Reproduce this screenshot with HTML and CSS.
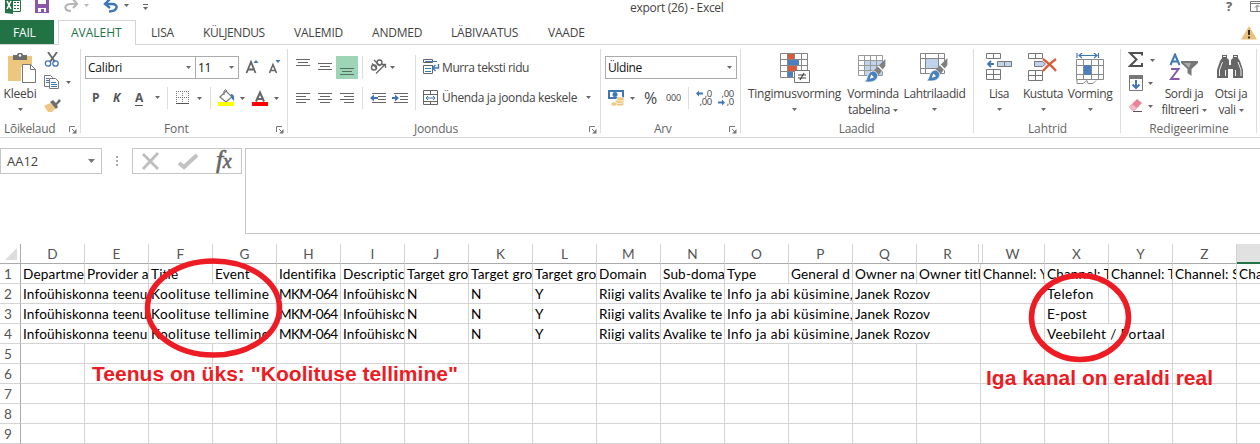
FILE: index.html
```html
<!DOCTYPE html>
<html lang="et">
<head>
<meta charset="utf-8">
<title>export (26) - Excel</title>
<link rel="stylesheet" href="styles.css">
</head>
<body>
<svg class="defs" aria-hidden="true">
  <symbol id="caret" viewBox="0 0 5 3"><path d="M0 0h5L2.5 3z" fill="#6a6a6a"/></symbol>
  <symbol id="launch" viewBox="0 0 8 8"><path d="M.5 6V.5H6M3 3l3 3" stroke="#777" fill="none"/><path d="M7.500 3v4.500H3z" fill="#777"/></symbol>
  <symbol id="brush" viewBox="0 0 16 17"><path d="M15 0v5L9 13 5 10z" fill="#808080"/><path d="M10 5l4 4" stroke="#fff"/><path d="M6 8.500c2 0 4 2 3.500 4C9 16 4 17 0 16c3-1 1-6 6-7.500z" fill="#4a80bd" stroke="#fff" stroke-width=".6"/><path d="M5 11l2 2-3 1z" fill="#fff"/></symbol>
</svg>
<div class="app">
  <header class="titlebar">
    <svg class="quick" width="160" height="20">
      <path d="M5 0h8v14l-8-1z" fill="#217346"/><path d="M13 .5h7.500v11H13" fill="#fff" stroke="#217346"/><path d="M14 2.500h5M14 5.500h5M14 8.500h5" stroke="#217346" stroke-dasharray="2 1"/><path d="M7 1l4 8M11 1L7 9" stroke="#fff" stroke-width="1.600"/>
      <path d="M35 0h14v13H35z" fill="#8857ab"/><path d="M38 0h8v4h-8z" fill="#fff"/><path d="M38 8h8v4h-2V9h-3v3h-3z" fill="#fff"/>
      <path d="M77 4H71c-8 0-7 7 0 7M73-1l4 5-4 4" stroke="#b5b5b5" stroke-width="2.200" fill="none"/><path d="M84 4h5l-2.500 3z" fill="#b9b9b9"/>
      <path d="M105 4h7c7 0 6 7-3 7.500M110-1l-5 5 5 4" stroke="#3f76b8" stroke-width="2.400" fill="none"/><path d="M124 4h5l-2.500 3z" fill="#666"/>
      <path d="M143 4.500h5" stroke="#666"/><path d="M143 7h5l-2.500 3z" fill="#666"/>
    </svg>
    <h1 class="doc-title">export (26) - Excel</h1>
    <span class="help">?</span>
    <svg class="win" width="10" height="13"><path d="M.5 1.500H14v10H.5zM0 3.500h10" stroke="#777" fill="none"/><path d="M7 11V6M5 7.500L7.500 5l2 2" stroke="#777" fill="none"/></svg>
  </header>
  <nav class="tabs">
    <a class="tab file">FAIL</a><a class="tab active">AVALEHT</a><a class="tab t-lisa">LISA</a><a class="tab t-kul">KÜLJENDUS</a><a class="tab t-val">VALEMID</a><a class="tab t-and">ANDMED</a><a class="tab t-lab">LÄBIVAATUS</a><a class="tab t-vaa">VAADE</a>
    <svg class="warn" width="16" height="14"><path d="M8 0l8 13.500H0z" fill="#ecc07b"/><path d="M8 4v5M8 10.500v2" stroke="#333" stroke-width="2"/></svg>
  </nav>
  <section class="ribbon">
    <div class="group g-clip">
      <div class="body bigs">
        <div class="big b-paste"><svg width="30" height="31"><path d="M0 3h24v11H13v14H0z" fill="#edc67f"/><path d="M5 7V2h4c0-3 6-3 6 0h4v5z" fill="#6d6d6d"/><circle cx="12" cy="2.500" r="1.200" fill="#fff"/><path d="M14.500 11.500h8l5 5v13h-13z" fill="#fff" stroke="#777"/><path d="M22.500 11.500v5h5" fill="none" stroke="#777"/></svg><span>Kleebi</span><svg class="caret"><use href="#caret"/></svg></div>
        <div class="smalls">
          <svg width="30" height="18"><path d="M4 0l7 10M13 0L6 10" stroke="#666" stroke-width="1.800"/><circle cx="4" cy="11.500" r="2.700" fill="none" stroke="#3f76b8" stroke-width="1.300"/><circle cx="11.500" cy="11.500" r="2.700" fill="none" stroke="#3f76b8" stroke-width="1.300"/></svg>
          <svg width="30" height="18"><path d="M.5.5h6l2 2v9h-8z" fill="#fff" stroke="#777"/><path d="M2 3.500h3M2 5.500h3M2 7.500h3" stroke="#3f76b8"/><path d="M5.500 3.500h6l3 3v7h-9z" fill="#fff" stroke="#777"/><path d="M7 7.500h5M7 9.500h6M7 11.500h6" stroke="#3f76b8"/><path d="M22 6h5l-2.500 3z" fill="#666"/></svg>
          <svg width="30" height="18"><path d="M0 8l6-3 6 5-4 4H4z" fill="#efc684"/><path d="M6 4l3-2 3 3 3-4 2 2-4 4 1 2-2 2z" fill="#6d6d6d"/></svg>
        </div>
      </div>
      <footer><span>Lõikelaud</span><svg class="launch"><use href="#launch"/></svg></footer>
    </div>
    <div class="group g-font">
      <div class="body rows">
        <div class="row font1">
          <div class="combo">Calibri<svg class="caret"><use href="#caret"/></svg></div><div class="combo">11<svg class="caret"><use href="#caret"/></svg></div>
          <svg width="46" height="23"><path d="M7.500 17L12 6l4.500 11M9 13.500h6" stroke="#666" stroke-width="1.800" fill="none"/><path d="M14.500 7h5L17 4z" fill="#3f76b8"/><path d="M30.500 17L34 8.500l3.500 8.500M31.500 14.500h5" stroke="#666" stroke-width="1.600" fill="none"/><path d="M36.500 4h5L39 7z" fill="#3f76b8"/></svg>
        </div>
        <div class="row font2">
          <b>P</b><b><i>K</i></b><b class="ul">A</b><svg class="caret"><use href="#caret"/></svg><i class="sep"></i>
          <svg width="36" height="24"><path d="M8.500 5v12M14.500 5v12M20.500 5v12M8 5.500h13M8 11.500h13" stroke="#777" stroke-dasharray="1 1"/><path d="M8 17.500h13" stroke="#555"/><path d="M29 11h5l-2.500 3z" fill="#666"/></svg><i class="sep s2"></i>
          <svg width="72" height="24"><path d="M9 11l6-6 6 6-6 5z" fill="#fff" stroke="#777" stroke-width="1.200"/><path d="M13 9V5q1.500-3 3 0" fill="none" stroke="#777"/><path d="M20 8q4 0 3 7-2-1-3-5z" fill="#3f76b8"/><path d="M7 16h16v4H7z" fill="#ff0"/><path d="M29 11h5l-2.500 3zM63 11h5l-2.500 3z" fill="#666"/><path d="M45 15.500L49 6.500l4 9M46.500 13h5" stroke="#666" stroke-width="2" fill="none"/><path d="M41 16h16v4H41z" fill="red"/></svg>
        </div>
      </div>
      <footer><span>Font</span><svg class="launch"><use href="#launch"/></svg></footer>
    </div>
    <div class="group g-align">
      <div class="body cols">
        <div class="rows">
          <svg class="row" width="127" height="23"><path d="M8 3.500h14M10 6.500h10M8 9.500h14M30 7.500h14M32 10.500h10M30 13.500h14" stroke="#666"/><path d="M48 0h22v23H48z" fill="#9fd5b7"/><path d="M52 12.500h14M54 15.500h10M52 18.500h14" stroke="#52705f"/><path d="M74.500 0v23" stroke="#ddd"/><g fill="none" stroke="#666" stroke-width="1.400"><circle cx="86" cy="11.500" r="2.500"/><path d="M84 7.500l5 5M86 4l6 6"/><circle cx="91.500" cy="6.500" r="2.500"/><path d="M88 17.500l9-9M93.500 8.500h4V12" stroke-width="1.300"/></g><path d="M102 10h5l-2.500 3z" fill="#666"/></svg>
          <svg class="row r2" width="127" height="24"><path d="M8 7.500h14M8 10.500h10M8 13.500h14M8 16.500h10M30 7.500h14M32 10.500h10M30 13.500h14M32 16.500h10M52 7.500h14M56 10.500h10M52 13.500h14M56 16.500h10M84 7.500h14M90 10.500h8M90 13.500h8M84 16.500h14M106 7.500h14M112 10.500h8M112 13.500h8M106 16.500h14" stroke="#666"/><path d="M74.500 1v22" stroke="#ddd"/><path d="M82 12l4-3.500v2.500h4v2h-4v2.500zM111 12l-4-3.500v2.500h-3v2h3v2.500z" fill="#3f76b8"/></svg>
        </div>
        <i class="sep tall"></i>
        <div class="rows wraps">
          <div class="row"><svg width="19" height="23"><path d="M.5 3.500h9v3h-9zM9.500 9v8.500h-9v-8h9" fill="none" stroke="#666"/><path d="M2 5.500h12M2 12.500h6M2 15.500h6" stroke="#3f76b8"/><path d="M15.500 8v4H10M12.500 9l-3 3 3 3" stroke="#3f76b8" stroke-width="1.400" fill="none"/></svg><span class="murra">Murra teksti ridu</span></div>
          <div class="row r2"><svg width="19" height="24"><path d="M.5 4.500h14v14H.5zM.5 8.500h14M.5 15.500h14M7.500 4v4M7.500 15.500v3" fill="none" stroke="#666"/><path d="M3 12h9M5 10l-2 2 2 2M10 10l2 2-2 2" stroke="#3f76b8" fill="none"/></svg><span class="yhenda">Ühenda ja joonda keskele</span><svg class="caret"><use href="#caret"/></svg></div>
        </div>
      </div>
      <footer><span>Joondus</span><svg class="launch"><use href="#launch"/></svg></footer>
    </div>
    <div class="group g-num">
      <div class="body rows">
        <div class="row"><div class="combo">Üldine<svg class="caret"><use href="#caret"/></svg></div></div>
        <div class="row num2"><svg width="29" height="24"><path d="M1 4h16v9H1z" fill="#3f76b8"/><path d="M3 6h12v5H3z" fill="#fff"/><circle cx="8" cy="8.500" r="2.500" fill="#3f76b8"/><g fill="#edc67f" stroke="#fff" stroke-width=".7"><ellipse cx="12.500" cy="18" rx="4.500" ry="2"/><ellipse cx="12.500" cy="15.500" rx="4.500" ry="2"/><ellipse cx="13.500" cy="13" rx="4" ry="2"/><ellipse cx="7" cy="18" rx="3" ry="2"/></g><path d="M23 11h5l-2.500 3z" fill="#666"/></svg><span class="pct">%</span><span class="tho">000</span><i class="sep"></i>
          <span class="dec"><span class="l1">,0</span><span>,00</span><svg width="8" height="7"><path d="M0 3.500l3-3v2h4v2H3v2z" fill="#3f76b8"/></svg></span>
          <span class="dec inc"><span>,00</span><span class="l1">,0</span><svg width="8" height="7"><path d="M7 3.500l-3-3v2H0v2h4v2z" fill="#3f76b8"/></svg></span></div>
      </div>
      <footer><span>Arv</span><svg class="launch"><use href="#launch"/></svg></footer>
    </div>
    <div class="group g-style">
      <div class="body bigs">
        <div class="big b-cond"><svg width="30" height="31"><path d="M.5.5h27v24H.5zM.5 6.500h27M.5 12.500h27M.5 18.500h27M7.500 0v24M14.500 0v24M21.500 0v24" fill="#fff" stroke="#858585"/><path d="M8 1h6v5H8zM8 13h9v5H8z" fill="#d95b3b"/><path d="M8 7h11v5H8zM8 19h5v5H8z" fill="#4a80bd"/><path d="M14.500 17.500h15v12h-15z" fill="#fff" stroke="#777"/><path d="M18 22h8M18 25h8M24 20l-4 7" stroke="#444" stroke-width="1.200"/></svg><span>Tingimusvorming</span><svg class="caret"><use href="#caret"/></svg></div>
        <div class="big b-tab"><svg width="30" height="31"><path d="M0 2.500h24.500v20H.5v-20" fill="#fff"/><path d="M6 7h18v15H6z" fill="#bfd3ea"/><path d="M.5 2.500h24v20H.5zM.5 7.500h24M.5 12.500h24M.5 17.500h24M6.500 2v20M12.500 2v20M18.500 2v20" fill="none" stroke="#999"/><use href="#brush" x="6" y="6" width="23" height="24"/></svg><span>Vorminda</span><span class="l2">tabelina<svg class="caret"><use href="#caret"/></svg></span></div>
        <div class="big b-cell"><svg width="30" height="31"><path d="M.5.5h24v20H.5zM.5 5.500h24M.5 15.500h24M5.500 0v20M18.500 0v20" fill="#fff" stroke="#858585"/><path d="M6 6h12v9H6z" fill="#bfd3ea"/><use href="#brush" x="6" y="5" width="23" height="24"/></svg><span>Lahtrilaadid</span><svg class="caret"><use href="#caret"/></svg></div>
      </div>
      <footer><span>Laadid</span></footer>
    </div>
    <div class="group g-cells">
      <div class="body bigs">
        <div class="big b-ins"><svg width="26" height="31"><path d="M.5.500h14v5H.500zM7.500.5v5M.5 16.500h14v10H.5zM.5 21.500h14M7.500 16.500v10" fill="#fff" stroke="#777"/><path d="M11.500 8.500h14v5h-14zM18.500 8.500v5" fill="#bfd3ea" stroke="#777"/><path d="M8 11H2M5 8l-3 3 3 3" stroke="#3f76b8" stroke-width="1.800" fill="none"/></svg><span>Lisa</span><svg class="caret"><use href="#caret"/></svg></div>
        <div class="big b-del"><svg width="30" height="31"><path d="M.5.500h14v5H.500zM7.500.5v5M.5 17.500h14v10H.5zM.5 22.500h14M7.500 17.500v10" fill="#fff" stroke="#777"/><path d="M6.500 8.500h8l3 2.500-3 2.500h-8z" fill="#bfd3ea" stroke="#777"/><path d="M15 6c4 3 9 7 13 12M28 6c-4 3-9 7-13 12" stroke="#d95b3b" stroke-width="2.200" fill="none"/></svg><span>Kustuta</span><svg class="caret"><use href="#caret"/></svg></div>
        <div class="big b-fmt"><svg width="28" height="32"><path d="M1 0v5M22.500 0v5M3 2.500h18M6 0L3 2.500 6 5M18 0l3 2.500L18 5" stroke="#3f76b8" stroke-width="1.200" fill="none"/><path d="M.5 6.500h27v20H.5zM.5 12.500h27M.5 21.500h27M7.500 6v21M15.500 6v21M22.500 6v21" fill="#fff" stroke="#8a8a8a"/><path d="M8 12h7v10H8z" fill="#4a80bd"/><path d="M1 27v3.500h6l4-3 1 3h5l3-3" fill="#fff" stroke="#8a8a8a"/></svg><span>Vorming</span><svg class="caret"><use href="#caret"/></svg></div>
      </div>
      <footer><span>Lahtrid</span></footer>
    </div>
    <div class="group g-edit">
      <div class="body bigs">
        <div class="smalls edits">
          <svg width="30" height="23"><path d="M14 3.500V1H2l6.500 6.500L2 14h12v-3" stroke="#505050" stroke-width="2" fill="none"/><path d="M22 7h5l-2.500 3z" fill="#666"/></svg>
          <svg width="30" height="23"><path d="M1.500.5h13v15h-13z" fill="#fff" stroke="#777"/><path d="M1 0h14v4H1z" fill="#777"/><path d="M8 5v8M4.500 9.500L8 13l3.500-3.500" stroke="#3f76b8" stroke-width="2" fill="none"/><path d="M20 7h5l-2.500 3z" fill="#666"/></svg>
          <svg width="30" height="23"><path d="M1 9L9 1l5 4-8 8z" fill="#e8839a"/><path d="M1 9l3-3 5 4-3 3H4z" fill="#f3b7c4"/><path d="M5 13.500h9" stroke="#555"/><path d="M20 7h5l-2.500 3z" fill="#666"/></svg>
        </div>
        <div class="big b-sort"><svg width="30" height="31"><path d="M1.500 12L6 1.500 10.500 12M3 8.500h6" stroke="#3f76b8" stroke-width="2" fill="none"/><path d="M2 16h7.500L2 26h8.500" stroke="#8857ab" stroke-width="2" fill="none"/><path d="M12 8h17v2l-6.500 6v7l-4-3v-4L12 10z" fill="#777"/><path d="M15 10h7l-2 5z" fill="#aaa"/></svg><span>Sordi ja</span><span class="l2">filtreeri<svg class="caret"><use href="#caret"/></svg></span></div>
        <div class="big b-find"><svg width="28" height="31"><path d="M5 2h5v3l2 2v5h2V7l2-2V2h5v3l2 3 3 9v8H16v-9h-5v9H0v-8l3-9 2-3z" fill="#666"/><path d="M2.500 23v-6l3-8M8.500 23v-6M18.500 23v-6M24 23v-6l-3-8M6 3.500h3M17 3.500h3" stroke="#fff" stroke-width=".9" fill="none"/></svg><span>Otsi ja</span><span class="l2">vali<svg class="caret"><use href="#caret"/></svg></span></div>
      </div>
      <footer><span>Redigeerimine</span></footer>
    </div>
  </section>
  <section class="formula">
    <div class="namebox">AA12<svg width="7" height="4"><path d="M0 0h7L3.500 4z" fill="#777"/></svg></div>
    <svg class="dots" width="30" height="26"><path d="M14 8h2v2h-2zM14 12h2v2h-2zM14 16h2v2h-2z" fill="#aaa"/></svg>
    <div class="fxbox"><svg width="70" height="24"><path d="M10 5l15 15M25 4L10 20" stroke="#bdbdbd" stroke-width="2.800"/><path d="M46 14l5 4L64 6" stroke="#c2c2c2" stroke-width="4" fill="none"/></svg><i class="fx">f<span class="x">x</span></i></div>
    <div class="input"></div>
  </section>
  <main class="sheet">
    <div class="line head"><div class="rh"><svg width="20" height="19"><path d="M17 4v12H5z" fill="#ddd"/></svg></div><div>D</div><div>E</div><div>F</div><div>G</div><div>H</div><div>I</div><div>J</div><div>K</div><div>L</div><div>M</div><div>N</div><div>O</div><div>P</div><div>Q</div><div class="pre-gap">R</div><div class="post-gap">W</div><div>X</div><div>Y</div><div>Z</div><div class="sel"></div></div>
    <div class="line"><div class="rh">1</div><div>Departme</div><div>Provider a</div><div>Title</div><div>Event</div><div>Identifika</div><div>Descriptic</div><div>Target gro</div><div>Target gro</div><div>Target gro</div><div>Domain</div><div>Sub-doma</div><div>Type</div><div>General d</div><div>Owner na</div><div>Owner titl</div><div>Channel: Y</div><div>Channel: T</div><div>Channel: T</div><div>Channel: S</div><div>Cha</div></div>
    <div class="line"><div class="rh">2</div><div class="w2">Infoühiskonna teenu</div><div class="w2 loose">Koolituse tellimine</div><div class="tight">MKM-064</div><div>Infoühisko</div><div>N</div><div>N</div><div>Y</div><div>Riigi valits</div><div>Avalike te</div><div class="w2 loose">Info ja abi küsimine,</div><div class="w2">Janek Rozov</div><div></div><div class="loose">Telefon</div><div></div><div></div><div></div></div>
    <div class="line"><div class="rh">3</div><div class="w2">Infoühiskonna teenu</div><div class="w2 loose">Koolituse tellimine</div><div class="tight">MKM-064</div><div>Infoühisko</div><div>N</div><div>N</div><div>Y</div><div>Riigi valits</div><div>Avalike te</div><div class="w2 loose">Info ja abi küsimine,</div><div class="w2">Janek Rozov</div><div></div><div>E-post</div><div></div><div></div><div></div></div>
    <div class="line"><div class="rh">4</div><div class="w2">Infoühiskonna teenu</div><div class="w2 loose">Koolituse tellimine</div><div class="tight">MKM-064</div><div>Infoühisko</div><div>N</div><div>N</div><div>Y</div><div>Riigi valits</div><div>Avalike te</div><div class="w2 loose">Info ja abi küsimine,</div><div class="w2">Janek Rozov</div><div></div><div class="w2 veebi">Veebileht / Portaal</div><div></div><div></div></div>
    <div class="line empty"><div class="rh">5</div></div>
    <div class="line empty"><div class="rh">6</div></div>
    <div class="line empty"><div class="rh">7</div></div>
    <div class="line empty"><div class="rh">8</div></div>
    <div class="line empty"><div class="rh">9</div></div>
  </main>
  <svg class="marks" width="1260" height="444"><g fill="none" stroke="#ed1c24" stroke-width="5.500"><ellipse cx="213.500" cy="308" rx="66" ry="47"/><ellipse cx="1080" cy="317.500" rx="48.500" ry="42"/></g></svg>
  <p class="note n1">Teenus on üks: "Koolituse tellimine"</p>
  <p class="note n2">Iga kanal on eraldi real</p>
</div>
</body>
</html>
```
FILE: styles.css
```css
* { box-sizing: border-box; }
body { margin: 0; background: #fff; overflow: hidden; }
.defs { position: absolute; width: 0; height: 0; }
.app { position: relative; width: 1260px; height: 444px; overflow: hidden; font: 12px/16px "Open Sans", "Noto Sans", sans-serif; letter-spacing: -0.4px; color: #444; white-space: nowrap; }
svg { display: block; flex: none; }
.caret { width: 5px; height: 3px; }
.launch { width: 8px; height: 8px; }

/* title bar */
.titlebar { display: flex; height: 20px; }
.doc-title { margin: 0 0 0 470px; width: 595px; font-size: 12px; font-weight: 400; line-height: 16px; letter-spacing: -0.3px; }
.help { width: 24px; margin-left: 3px; font-weight: 700; font-size: 13px; line-height: 13px; color: #666; }

/* tabs */
.tabs { display: flex; height: 25px; border-bottom: 1px solid #d4d4d4; line-height: 25px; letter-spacing: -0.2px; }
.tab { flex: none; width: 80px; }
.file { width: 54px; padding-left: 13px; margin-right: 4px; background: #217346; color: #fff; }
.active { width: 78px; height: 25px; padding-left: 12px; border: 1px solid #d4d4d4; border-bottom: 0; background: #fff; color: #217346; line-height: 23px; letter-spacing: 0; }
.t-lisa { margin-left: 15px; width: 52px; }
.t-kul { width: 91px; letter-spacing: -0.4px; }
.t-val { width: 78px; }
.t-and { width: 79px; }
.t-lab { width: 97px; }
.t-vaa { width: 693px; }
.warn { margin-top: 6px; }

/* ribbon */
.ribbon { display: flex; height: 93px; border-bottom: 1px solid #d4d4d4; }
.group { display: flex; flex-direction: column; flex: none; height: 92px; background: linear-gradient(#ddd, #ddd) right 4px / 1px 84px no-repeat; }
.g-clip { width: 81px; }
.g-font { width: 207px; }
.g-align { width: 313px; }
.g-num { width: 140px; }
.g-style { width: 233px; }
.g-cells { width: 147px; }
.g-edit { width: 136px; }
.body { height: 76px; }
.group footer { display: flex; justify-content: center; height: 16px; line-height: 16px; color: #666; letter-spacing: -0.1px; }
footer .launch { margin-top: 5px; }
.g-clip footer { justify-content: space-between; padding: 0 4px; letter-spacing: -0.4px; }
.g-clip footer span { letter-spacing: -0.3px; }
.g-font footer span, .g-align footer span, .g-num footer span { flex: 1; }
.g-font footer { padding: 0 4px 0 83px; }
.g-align footer { padding: 0 4px 0 126px; letter-spacing: -0.2px; }
.g-num footer { padding: 0 4px 0 53px; letter-spacing: -0.4px; }
.g-style footer { padding-right: 2px; letter-spacing: -0.3px; }
.bigs, .cols { display: flex; }
.big { display: flex; flex-direction: column; align-items: center; flex: none; padding-top: 8px; }
.big > span { line-height: 16px; }
.big > svg:first-child { height: 33px; }
.big > .caret { margin-top: 6px; }
.big .l2 { display: flex; align-items: center; gap: 3px; }
.b-paste { width: 40px; letter-spacing: -0.2px; }
.b-paste > svg:first-child { margin-left: 5px; }
.smalls { display: grid; grid-template-rows: 23px 23px 23px; padding: 7px 0 0 4px; }
.b-cond { width: 107px; letter-spacing: -0.25px; }
.b-tab { width: 50px; }
.b-cell { width: 73px; }
.b-ins { width: 50px; }
.b-del { width: 38px; margin-right: 2px; }
.b-fmt { width: 52px; }
.edits { width: 38px; padding: 7px 0 0 7px; }
.b-sort { width: 50px; }
.b-find { width: 44px; }

.rows { display: flex; flex-direction: column; padding-top: 11px; gap: 7px; }
.row { display: flex; align-items: center; height: 23px; }
.sep { flex: none; width: 1px; height: 22px; background: #ddd; }
.combo { display: flex; align-items: center; justify-content: space-between; height: 23px; padding: 0 4px 0 2px; border: 1px solid #ababab; color: #111; background: #fff; }
.g-font .body { padding-left: 4px; }
.font1 .combo:first-child { width: 111px; letter-spacing: -0.2px; }
.font1 .combo:nth-child(2) { width: 44px; margin-left: -1px; }
.font2 { padding-left: 7px; }
.font2 b { width: 21px; color: #555; }
.font2 b:nth-child(3) { width: 21px; }
.font2 b.ul { padding-left: 1px; text-decoration: underline; text-underline-offset: 3px; }
.font2 .sep { margin-left: 7px; }
.font2 .s2 { margin-left: 6px; }
.g-align .cols .rows { height: 76px; }
.tall { height: 55px; margin-top: 10px; }
.wraps { padding-left: 7px; }
.yhenda { width: 144px; letter-spacing: -0.36px; }
.g-num .body { padding-left: 4px; }
.g-num .combo { width: 132px; }
.num2 { padding-left: 2px; }
.pct { width: 22px; margin-left: 8px; font-size: 16px; }
.tho { width: 22px; font-size: 9px; letter-spacing: -0.2px; }
.dec { position: relative; display: flex; flex-direction: column; align-items: flex-end; width: 16px; margin-left: 7px; font-size: 9.5px; line-height: 8px; letter-spacing: -0.3px; }
.dec svg { position: absolute; left: 0; top: 0; }
.inc { margin-left: 6px; }
.dec.inc svg { top: 9px; }

/* formula bar */
.formula { display: flex; height: 106px; padding-top: 10px; }
.namebox { display: flex; justify-content: space-between; align-items: center; width: 102px; height: 26px; padding: 0 6px 0 6px; border: 1px solid #c6c6c6; font-size: 13px; letter-spacing: 0; }
.fxbox { display: flex; width: 110px; height: 26px; border: 1px solid #c6c6c6; }
.fx { width: 30px; padding-left: 13px; font: italic 26px/22px "Liberation Serif", serif; color: #666; -webkit-text-stroke: 0.6px #666; }
.fx .x { font-size: 20px; }
.input { flex: 1; height: 86px; margin-left: 3px; border: 1px solid #c6c6c6; border-right: 0; }

/* grid */
.sheet { width: 1301px; font: 13.6px/20px Lato, "Open Sans", sans-serif; letter-spacing: 0.15px; color: #000; }
.line { display: flex; height: 20px; }
.line > div { flex: none; width: 64px; height: 20px; padding-left: 2px; overflow: hidden; border: solid #d4d4d4; border-width: 0 1px 1px 0; }
.line > .w2 { width: 128px; }
.line > .loose { letter-spacing: 0.42px; }
.line > .veebi { letter-spacing: 0.35px; }
.line > .tight { letter-spacing: -0.65px; }
.line > .rh { width: 21px; padding-left: 4px; border-right-color: #ababab; color: #555; }
.line.head > div { padding: 0; text-align: center; border-bottom-color: #ababab; color: #555; }
.line.head > .pre-gap { width: 62px; }
.line.head > .post-gap { width: 66px; padding-left: 2px; background: linear-gradient(#d4d4d4, #d4d4d4) 3px 0 / 1px 100% no-repeat; }
.line.head > .sel { background: #e1e1e1; border-bottom: 2px solid #217346; }
.empty { background: repeating-linear-gradient(90deg, transparent 0 63px, #d4d4d4 63px 64px) 21px 0 no-repeat, linear-gradient(#d4d4d4, #d4d4d4) 0 19px / 100% 1px no-repeat; }

/* annotations drawn over the sheet */
.marks { position: absolute; left: 0; top: 0; }
.note { position: absolute; margin: 0; font: bold 21px/24px "Liberation Sans", Arial, sans-serif; letter-spacing: 0.03px; color: #ed1c24; }
.n1 { left: 92px; top: 362px; }
.n2 { left: 986px; top: 366px; }
```
